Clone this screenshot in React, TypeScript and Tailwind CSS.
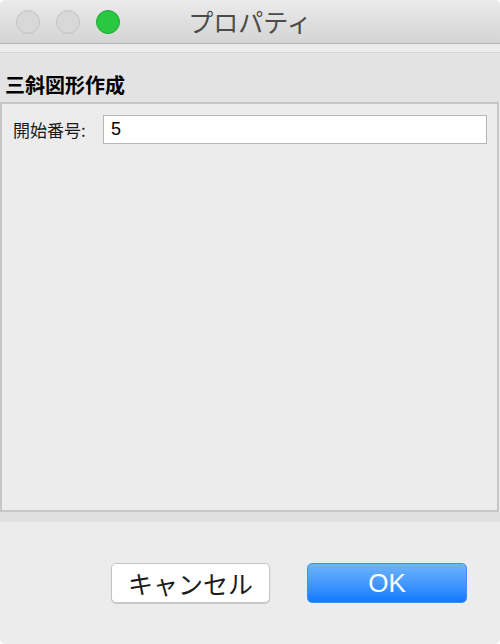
export default function App() {
  const jp = { fontFamily: '"Noto Sans CJK JP", "Liberation Sans", sans-serif' };
  const lat = { fontFamily: '"Liberation Sans", "Noto Sans CJK JP", sans-serif' };

  return (
    <div className="w-[500px] h-[644px] bg-[#ececec] rounded-[5px] overflow-hidden flex flex-col" style={jp}>
      {/* title bar */}
      <div className="relative h-[44px] shrink-0 bg-gradient-to-b from-[#ebebeb] to-[#d4d4d4] border-b border-[#b3b3b3] flex items-start">
        <div className="flex gap-[16px] pl-[16px] pt-[10px]">
          <span className="w-[24px] h-[24px] rounded-full bg-[#d8d8d8] border border-[#c2c2c2]" />
          <span className="w-[24px] h-[24px] rounded-full bg-[#d8d8d8] border border-[#c2c2c2]" />
          <span className="w-[24px] h-[24px] rounded-full bg-[#28c840] border border-[#1fa834]" />
        </div>
        <div className="absolute inset-x-0 top-[6px] text-center text-[25px] leading-[30px] text-[#4b4b4b] pointer-events-none">
          プロパティ
        </div>
      </div>

      <div className="h-[9px] shrink-0 bg-[#ececec] border-b border-[#d3d3d3]" />

      <div className="h-[49px] shrink-0 bg-[#e3e3e3] pl-[5px] pt-[20px]">
        <div className="text-[20px] leading-[24px] font-bold text-black">三斜図形作成</div>
      </div>

      {/* panel */}
      <div className="h-[410px] shrink-0 mr-[1px] border-2 border-[#c6c6c6] bg-[#ececec] pt-[11px] pl-[11px] pr-[10px]">
        <div className="flex items-center">
          <span className="w-[90px] text-[17px] leading-[29px] text-[#1a1a1a]">開始番号:</span>
          <div className="flex-1 h-[29px] bg-white border border-[#b6b6b6] pl-[7px] flex items-center text-[18px] text-black" style={lat}>
            5
          </div>
        </div>
      </div>

      <div className="h-[10px] shrink-0 bg-[#e0e0e0]" />

      {/* buttons */}
      <div className="flex-1 flex justify-end items-start gap-[37px] pr-[33px] pt-[41px]">
        <button className="w-[159px] h-[40px] bg-white rounded-[5px] border border-[#c4c4c4] shadow-[0_1px_1px_rgba(0,0,0,0.15)] text-[25px] leading-none text-[#1a1a1a]" style={jp}>
          キャンセル
        </button>
        <button className="w-[160px] h-[40px] rounded-[5px] bg-gradient-to-b from-[#6db4fb] to-[#0b7aff] border border-[#3d8ff5] text-[26px] leading-none text-white" style={lat}>
          OK
        </button>
      </div>
    </div>
  );
}
